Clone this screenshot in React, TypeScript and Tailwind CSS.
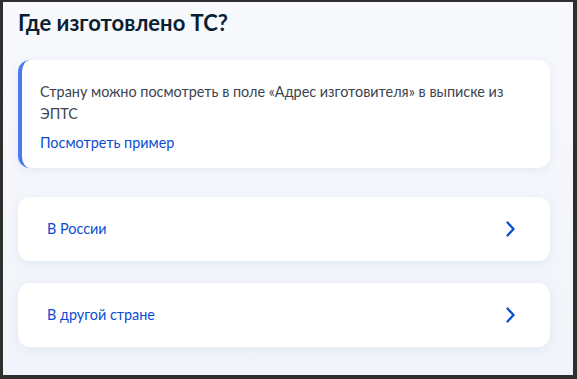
function OptionCard({ label }: { label: string }) {
  return (
    <button className="flex h-[64px] w-full cursor-pointer items-center justify-between rounded-xl bg-white pl-[29px] pr-[35px] text-left shadow-[0_2px_10px_rgba(175,190,220,0.25)]">
      <span className="text-[14.4px] text-[#0d4cd3]">{label}</span>
      <svg width="9" height="16" viewBox="0 0 9 16" fill="none" className="text-[#0d4cd3]">
        <path
          d="M1.5 1.5 7.5 8l-6 6.5"
          stroke="currentColor"
          strokeWidth="2.3"
          strokeLinecap="round"
          strokeLinejoin="round"
        />
      </svg>
    </button>
  );
}

export default function App() {
  return (
    <div className="h-[379px] w-[577px] bg-[#2f2f2f] pb-[4px] pl-[3px] pr-[4px] pt-[2px] font-['Lato','Noto_Sans',sans-serif]">
      <div className="flex h-full flex-col bg-gradient-to-b from-[#f8f9fd] to-[#f1f4fa] pl-[15px] pr-[23px]">
        {/* Title */}
        <h1 className="mt-[6px] text-[22px] font-bold leading-[30px] text-[#0b1f33]">
          Где изготовлено ТС?
        </h1>

        {/* Info card */}
        <div className="mt-[22px] rounded-xl border-l-4 border-[#4a7cf0] bg-white pb-[14px] pl-[18px] pr-5 pt-[21px] shadow-[0_2px_10px_rgba(175,190,220,0.25)]">
          <p className="text-[14.4px] leading-[22px] text-[#3b4450]">
            Страну можно посмотреть в поле «Адрес изготовителя» в выписке из ЭПТС
          </p>
          <a className="mt-[7px] block text-[14.4px] leading-[22px] text-[#0d4cd3]">
            Посмотреть пример
          </a>
        </div>

        {/* Options */}
        <div className="mt-[29px] flex flex-col gap-[22px]">
          <OptionCard label="В России" />
          <OptionCard label="В другой стране" />
        </div>
      </div>
    </div>
  );
}
